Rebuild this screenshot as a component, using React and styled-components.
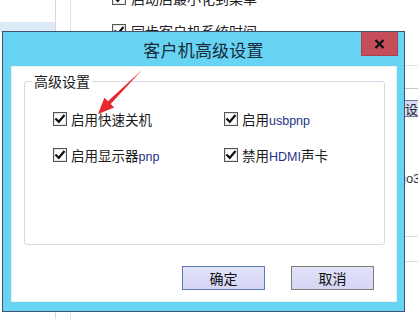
import React from "react";
import styled, { createGlobalStyle } from "styled-components";

const Global = createGlobalStyle`
  html, body { margin: 0; padding: 0; background: #ffffff; overflow: hidden; }
  * { box-sizing: border-box; }
`;

const CJK = `"Noto Sans CJK SC", "Noto Sans", sans-serif`;

const Stage = styled.div`
  position: relative;
  width: 418px;
  height: 319px;
  overflow: hidden;
  font-family: ${CJK};
`;

/* ---------- background window (behind dialog) ---------- */
const Desktop = styled.div`
  display: flex;
  height: 319px;
  background: #ffffff;
`;

const LeftPanel = styled.div`
  width: 56px;
  border-right: 1px solid #d4d6e0;
  padding-top: 22px;
`;

const Band = styled.div`
  height: 10px;
  background: #dbeaf6;
`;

const Gutter = styled.div`
  width: 15px;
  border-right: 1px solid #e2e3ea;
`;

const Main = styled.div`
  flex: 1;
  display: flex;
`;

const MainBody = styled.div`
  flex: 1;
  padding-left: 41px;
  display: flex;
  flex-direction: column;
  gap: 15px;
  margin-top: -11px;
`;

const BgRow = styled.div`
  display: flex;
  align-items: center;
  gap: 5px;
  height: 18px;
  font-size: 14px;
  color: #222;
  white-space: nowrap;
`;

const RightStrip = styled.div`
  width: 13px;
  display: flex;
  flex-direction: column;
  overflow: hidden;
`;

const HLine = styled.div`
  height: 1px;
  background: ${(p) => p.$c || "#dcdcdc"};
  margin-top: ${(p) => p.$mt}px;
`;

const SideButton = styled.div`
  margin-top: 11px;
  height: 17px;
  background: #d9dbf6;
  border-top: 1px solid #6c7aa8;
  border-bottom: 1px solid #6c7aa8;
  font-size: 13px;
  line-height: 15px;
  color: #222;
  white-space: nowrap;
`;

const SideText = styled.div`
  margin-top: 55px;
  font-family: "Liberation Sans", sans-serif;
  font-size: 13px;
  line-height: 14px;
  color: #333;
  white-space: nowrap;
  margin-left: -2px;
`;

/* ---------- checkbox ---------- */
const Box = styled.span`
  flex: none;
  width: 14px;
  height: 14px;
  border: 1px solid #555650;
  box-shadow: inset 0 0 0 1px #e4e4e4;
  background: #fff;
  display: inline-flex;
  align-items: center;
  justify-content: center;
`;

const CheckBox = () => (
  <Box>
    <svg width="12" height="12" viewBox="0 0 12 12">
      <path d="M2.2 6.2 L4.8 8.8 L9.8 2.8" fill="none" stroke="#111" strokeWidth="2.2" strokeLinecap="square" />
    </svg>
  </Box>
);

/* ---------- dialog ---------- */
const Dialog = styled.div`
  position: absolute;
  left: 2px;
  top: 31px;
  width: 403px;
  height: 281px;
  border: 1px solid #3d5472;
  background: #67d4f4;
  display: flex;
  flex-direction: column;
`;

const TitleBar = styled.div`
  height: 34px;
  display: grid;
  grid-template-columns: 1fr auto 1fr;
  align-items: center;
`;

const Title = styled.div`
  grid-column: 2;
  font-size: 17px;
  color: #1a2a3a;
  letter-spacing: 0.2px;
`;

const CloseButton = styled.div`
  grid-column: 3;
  justify-self: end;
  align-self: start;
  margin-right: 6px;
  width: 37px;
  height: 24px;
  background: #c44f5a;
  border: 1px solid #a7434d;
  border-top: none;
  display: flex;
  align-items: center;
  justify-content: center;
`;

const Content = styled.div`
  flex: 1;
  margin: 0 7px 9px 8px;
  background: #ffffff;
  border: 1px solid #e6f3ee;
  padding: 5px 12px 0 12px;
`;

const Group = styled.fieldset`
  margin: 0;
  width: 361px;
  height: 173px;
  border: 1px solid #d6d9e8;
  border-radius: 3px;
  padding: 0;
  min-width: 0;
`;

const Legend = styled.legend`
  margin-left: 7px;
  padding: 0 2px;
  font-size: 14px;
  line-height: 18px;
  color: #1a1a1a;
`;

const OptionGrid = styled.div`
  display: grid;
  grid-template-columns: 171px auto;
  row-gap: 18px;
  padding: 20px 0 0 28px;
`;

const Option = styled.label`
  display: flex;
  align-items: center;
  gap: 4px;
  height: 18px;
  font-size: 13.5px;
  color: #1a1a1a;
  white-space: nowrap;
`;

const Latin = styled.span`
  font-family: "Liberation Sans", sans-serif;
  font-size: 12.5px;
  color: #26308a;
`;

const ButtonRow = styled.div`
  display: flex;
  justify-content: flex-end;
  gap: 26px;
  margin-top: 21px;
  padding-right: 10px;
`;

const Button = styled.button`
  width: 83px;
  height: 24px;
  padding: 0;
  font-family: ${CJK};
  font-size: 14px;
  color: #111;
  background: linear-gradient(#e2e2fb, #d5d5f5);
  border: 1px solid ${(p) => (p.$primary ? "#5b78b6" : "#7d7e72")};
  border-radius: 0;
`;

const Annotation = styled.svg`
  position: absolute;
  left: 0;
  top: 0;
  pointer-events: none;
`;

export default function App() {
  return (
    <Stage>
      <Global />
      <Desktop>
        <LeftPanel>
          <Band />
        </LeftPanel>
        <Gutter />
        <Main>
          <MainBody>
            <BgRow>
              <CheckBox />
              <span>启动后最小化到菜单</span>
            </BgRow>
            <BgRow>
              <CheckBox />
              <span>同步客户机系统时间</span>
            </BgRow>
          </MainBody>
          <RightStrip>
            <HLine $mt={65} $c="#e4e4e8" />
            <HLine $mt={22} $c="#c9cad2" />
            <SideButton>设置</SideButton>
            <SideText>jo3</SideText>
            <HLine $mt={50} $c="#dddde2" />
            <HLine $mt={24} $c="#dddde2" />
          </RightStrip>
        </Main>
      </Desktop>

      <Dialog>
        <TitleBar>
          <Title>客户机高级设置</Title>
          <CloseButton>
            <svg width="11" height="10" viewBox="0 0 11 10">
              <path d="M1.5 1 L9.5 9 M9.5 1 L1.5 9" stroke="#111" strokeWidth="2.4" />
            </svg>
          </CloseButton>
        </TitleBar>
        <Content>
          <Group>
            <Legend>高级设置</Legend>
            <OptionGrid>
              <Option>
                <CheckBox />
                <span>启用快速关机</span>
              </Option>
              <Option>
                <CheckBox />
                <span>
                  启用<Latin>usbpnp</Latin>
                </span>
              </Option>
              <Option>
                <CheckBox />
                <span>
                  启用显示器<Latin>pnp</Latin>
                </span>
              </Option>
              <Option>
                <CheckBox />
                <span>
                  禁用<Latin>HDMI</Latin>声卡
                </span>
              </Option>
            </OptionGrid>
          </Group>
          <ButtonRow>
            <Button $primary>确定</Button>
            <Button>取消</Button>
          </ButtonRow>
        </Content>
      </Dialog>

      <Annotation width="418" height="319" viewBox="0 0 418 319">
        <polygon
          points="142,70 110.7,104.1 114.2,107.6 98,114 104.4,97.8 107.9,101.3"
          fill="#e8282f"
        />
      </Annotation>
    </Stage>
  );
}
